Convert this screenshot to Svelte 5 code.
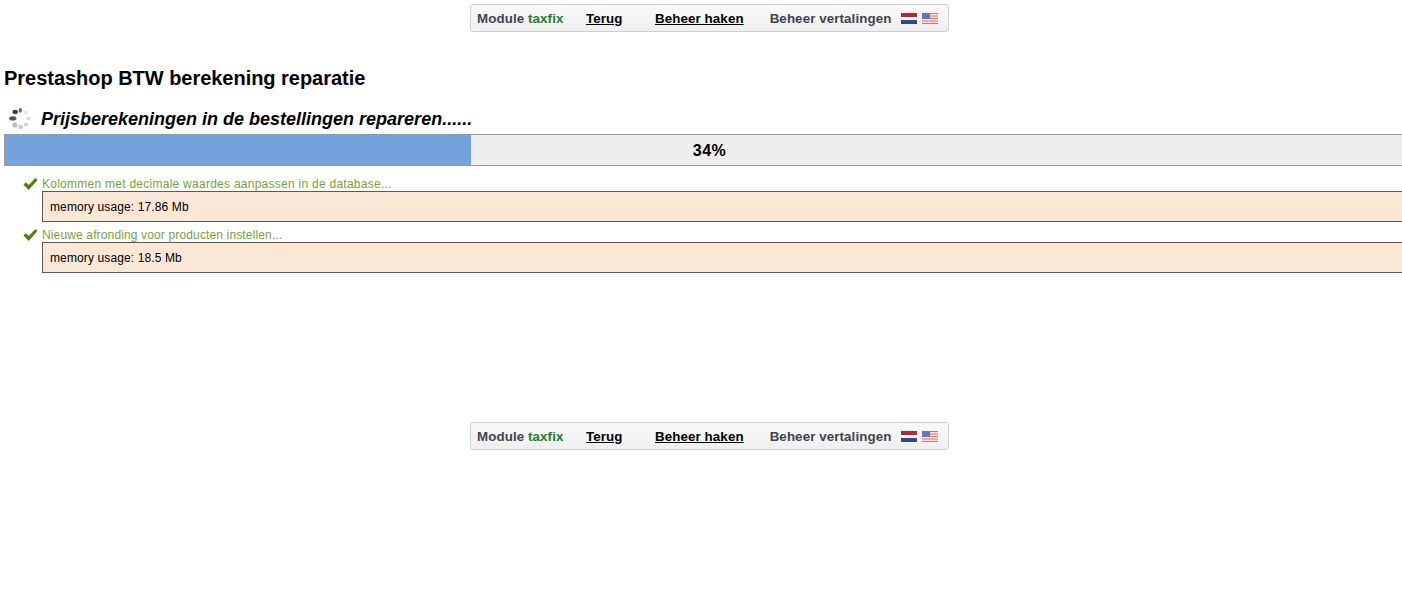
<script>
  let progress = 466;
  let steps = [
    { label: "Kolommen met decimale waardes aanpassen in de database...", memory: "17.86 Mb", spacing: 0.26 },
    { label: "Nieuwe afronding voor producten instellen...", memory: "18.5 Mb", spacing: 0.14 },
  ];
  let dots = [
    { x: 12.8, y: 117.4, rx: 3.6, ry: 2.1, fill: "#555555" },
    { x: 15.2, y: 110.9, rx: 2.8, ry: 2.1, fill: "#444444" },
    { x: 20.3, y: 109.4, rx: 1.6, ry: 2.4, fill: "#666666" },
    { x: 26, y: 111.7, rx: 1.9, ry: 1.9, fill: "#e2e2e2" },
    { x: 28.4, y: 117.4, rx: 2.3, ry: 2, fill: "#d8d8d8" },
    { x: 26, y: 123.4, rx: 2.1, ry: 2.1, fill: "#d4d4d4" },
    { x: 20.7, y: 126, rx: 2.3, ry: 2.3, fill: "#c8c8c8" },
    { x: 15, y: 124, rx: 2.6, ry: 2.6, fill: "#bdbdbd" },
  ];
</script>

{#snippet menu()}
  <nav class="menu">
    <span class="title">Module <b>taxfix</b></span>
    <a href="#terug" class="terug">Terug</a>
    <a href="#haken" class="haken">Beheer haken</a>
    <span class="vertalingen">Beheer vertalingen</span>
    <svg class="flag nl" width="16" height="11" viewBox="0 0 16 11">
      <rect width="16" height="4" fill="#b5263a" />
      <rect y="4" width="16" height="3" fill="#f4f4f4" />
      <rect y="7" width="16" height="4" fill="#2b4a8c" />
    </svg>
    <svg class="flag us" width="16" height="11" viewBox="0 0 16 11">
      <rect width="16" height="11" fill="#f6e4e0" />
      <rect width="16" height="1" fill="#d4766e" />
      <rect y="2.5" width="16" height="1" fill="#d4766e" />
      <rect y="5" width="16" height="1" fill="#d4766e" />
      <rect y="7.5" width="16" height="1" fill="#d4766e" />
      <rect y="10" width="16" height="1" fill="#d4766e" />
      <rect width="8" height="6" fill="#5f78c0" />
    </svg>
  </nav>
{/snippet}

<div class="page">
  {@render menu()}

  <h1>Prestashop BTW berekening reparatie</h1>

  <div class="status">
    <svg class="spinner" width="32" height="24" viewBox="4 106 32 24">
      {#each dots as d}
        <ellipse cx={d.x} cy={d.y} rx={d.rx} ry={d.ry} fill={d.fill} />
      {/each}
    </svg>
    <h2>Prijsberekeningen in de bestellingen repareren......</h2>
  </div>

  <div class="bar">
    <div class="fill" style="width: {progress}px"></div>
    <span>34%</span>
  </div>

  <ul class="steps">
    {#each steps as step}
      <li>
        <div class="label">
          <svg width="15" height="14" viewBox="0 0 16 14">
            <path d="M0.5 7.5 L3 5 L6 8 L13.4 0.6 L15.5 2.6 L6 13.4 Z" fill="#4f7f12" />
          </svg>
          <span style="letter-spacing: {step.spacing}px">{step.label}</span>
        </div>
        <div class="memory">memory usage: {step.memory}</div>
      </li>
    {/each}
  </ul>

  <div class="bottom">
    {@render menu()}
  </div>
</div>

<style>
  :global(body) {
    margin: 0;
    background: #fff;
    overflow: hidden;
  }

  .page {
    width: 1402px;
    height: 597px;
    overflow: hidden;
    font-family: "Liberation Sans", Arial, sans-serif;
    color: #000;
  }

  .menu {
    box-sizing: border-box;
    display: flex;
    align-items: center;
    width: 479px;
    height: 28px;
    margin: 0 auto;
    position: relative;
    left: 8.5px;
    padding-left: 6px;
    border: 1px solid #cfcfcf;
    border-radius: 3px;
    background: linear-gradient(#f9f9f9, #efefef);
    font-size: 13.33px;
    letter-spacing: 0.1px;
    font-weight: bold;
    color: #3f4650;
    white-space: nowrap;
  }

  .page > .menu {
    margin-top: 4px;
  }

  .menu b {
    color: #1c7f2c;
  }

  .menu a {
    color: #000;
    text-decoration: underline;
  }

  .terug {
    margin-left: 22.5px;
  }

  .haken {
    margin-left: 32.5px;
  }

  .vertalingen {
    margin-left: 26px;
  }

  .flag {
    flex: none;
    margin-top: 1px;
  }

  .nl {
    margin-left: 10px;
  }

  .us {
    margin-left: 5px;
  }

  h1 {
    margin: 35px 0 0 4px;
    font-size: 20px;
    letter-spacing: -0.03px;
    line-height: 23px;
    font-weight: bold;
  }

  .status {
    display: flex;
    align-items: center;
    height: 24px;
    margin: 17px 0 0 4px;
  }

  .spinner {
    flex: none;
    margin-right: 5px;
  }

  h2 {
    margin: 0;
    font-size: 18px;
    line-height: 24px;
    font-weight: bold;
    font-style: italic;
    white-space: nowrap;
  }

  .bar {
    box-sizing: border-box;
    display: flex;
    align-items: center;
    justify-content: center;
    position: relative;
    width: 1410px;
    height: 32px;
    margin: 3px 0 0 4px;
    padding-top: 2px;
    border: 1px solid #999;
    border-right: 0;
    background: #eee;
    font-size: 16px;
    letter-spacing: 0.5px;
    font-weight: bold;
  }

  .fill {
    position: absolute;
    left: 0;
    top: 0;
    bottom: 0;
    background: #74a2dc;
  }

  .bar span {
    position: relative;
  }

  .steps {
    list-style: none;
    margin: 11px 0 0 23px;
    padding: 0;
    width: 1400px;
  }

  .steps li + li {
    margin-top: 6px;
  }

  .label {
    display: flex;
    align-items: center;
    height: 14px;
    font-size: 12px;
    color: #7a9f3d;
    white-space: nowrap;
  }

  .label svg {
    flex: none;
    margin-right: 4px;
  }

  .memory {
    box-sizing: border-box;
    height: 31px;
    margin-left: 19px;
    padding-left: 7px;
    display: flex;
    align-items: center;
    border: 1px solid #5a5a5a;
    border-right: 0;
    background: #fbe7d6;
    font-size: 12px;
    letter-spacing: 0.12px;
    color: #000;
  }

  .bottom {
    margin-top: 149px;
  }
</style>
